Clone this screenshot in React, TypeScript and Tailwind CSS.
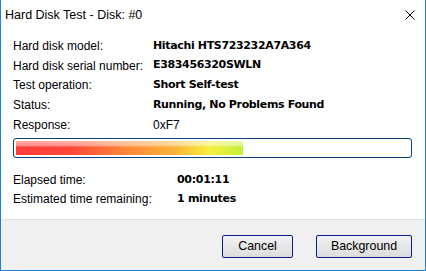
import React from "react";

const rows: [string, string, boolean][] = [
  ["Hard disk model:", "Hitachi HTS723232A7A364", true],
  ["Hard disk serial number:", "E383456320SWLN", true],
  ["Test operation:", "Short Self-test", true],
  ["Status:", "Running, No Problems Found", true],
  ["Response:", "0xF7", false],
];

export default function App() {
  const ui = { fontFamily: '"Liberation Sans", Arial, sans-serif' };
  const bold = { fontFamily: 'Tahoma, "DejaVu Sans", "Liberation Sans", sans-serif' };
  return (
    <div className="w-[426px] h-[271px] bg-white border-x border-b border-[#1883d7] flex flex-col text-black" style={ui}>
      <div className="h-[30px] flex items-center justify-between pl-[4px] pr-[10px] shrink-0">
        <span className="text-[12.5px] leading-none">Hard Disk Test - Disk: #0</span>
        <svg width="10" height="10" viewBox="0 0 10 10">
          <path d="M0.5 0.5 L9.5 9.5 M9.5 0.5 L0.5 9.5" stroke="#000" strokeWidth="1" />
        </svg>
      </div>
      <div className="flex-1 flex flex-col pl-[12px] pr-[13px]">
        <div className="flex flex-col mt-[6px]">
          {rows.map(([l, v, b]) => (
            <div key={l} className="h-[19.7px] flex items-center text-[12px]">
              <span className="w-[140px] shrink-0">{l}</span>
              {b ? (
                <span className="font-bold text-[11px] tracking-[-0.35px]" style={bold}>{v}</span>
              ) : (
                <span>{v}</span>
              )}
            </div>
          ))}
        </div>
        <div className="mt-[4px] h-[20px] w-[399px] border border-[#08427a] rounded-[3px] p-[2px]">
          <div
            className="h-full w-[227px] relative"
            style={{
              background:
                "linear-gradient(90deg, #ff3b3b 0%, #ff4a38 25%, #ff8a3a 50%, #f9b33a 70%, #f7ef3c 85%, #c4f03a 100%)",
            }}
          >
            <div
              className="absolute inset-0"
              style={{
                background:
                  "linear-gradient(180deg, rgba(255,255,255,0.55) 0%, rgba(255,255,255,0.45) 30%, rgba(255,255,255,0) 45%, rgba(255,255,255,0) 100%)",
              }}
            />
          </div>
        </div>
        <div className="flex flex-col mt-[12px]">
          <div className="h-[19px] flex items-center text-[12px]">
            <span className="w-[164px] shrink-0">Elapsed time:</span>
            <span className="font-bold text-[11px] tracking-[-0.3px]" style={bold}>00:01:11</span>
          </div>
          <div className="h-[19px] flex items-center text-[12px]">
            <span className="w-[164px] shrink-0">Estimated time remaining:</span>
            <span className="font-bold text-[11px] tracking-[-0.3px]" style={bold}>1 minutes</span>
          </div>
        </div>
      </div>
      <div className="h-[51px] shrink-0 bg-[#f0f0f0] border-t border-[#dfdfdf] flex items-center justify-end gap-[23px] pr-[13px] pt-[3px]">
        <button className="w-[71px] h-[23px] border border-[#0a1a8a] rounded-[2px] bg-gradient-to-b from-[#f2f2f2] to-[#dcdcdc] text-[12.4px] leading-none">
          Cancel
        </button>
        <button className="w-[96px] h-[23px] border border-[#0a1a8a] rounded-[2px] bg-gradient-to-b from-[#f2f2f2] to-[#dcdcdc] text-[12.4px] leading-none">
          Background
        </button>
      </div>
    </div>
  );
}
